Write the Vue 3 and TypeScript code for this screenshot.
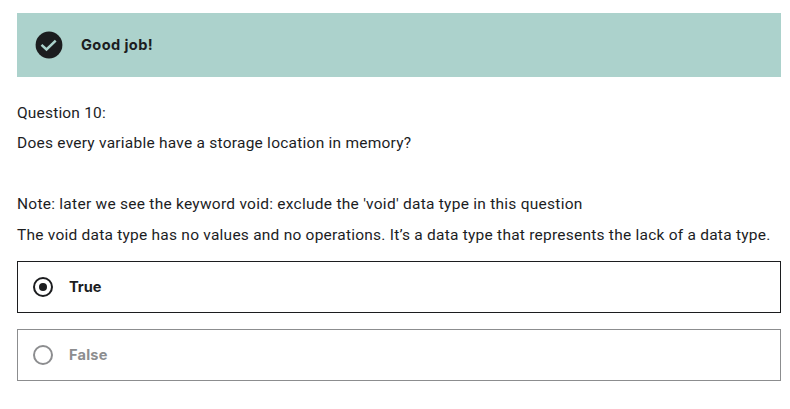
<script setup lang="ts">
import { ref } from 'vue'

interface Line { text: string; id: string }

const lines: Line[] = [
  { id: 'number', text: 'Question 10:' },
  { id: 'prompt', text: 'Does every variable have a storage location in memory?' },
  { id: 'gap', text: '\u00a0' },
  { id: 'note', text: "Note: later we see the keyword void: exclude the 'void' data type in this question" },
  { id: 'void', text: 'The void data type has no values and no operations. It’s a data type that represents the lack of a data type.' },
]
const options: string[] = ['True', 'False']
const selected = ref<string>('True')
</script>

<template>
  <main class="quiz">
    <header class="banner">
      <svg class="check" viewBox="0 0 28 28" aria-hidden="true">
        <circle cx="14" cy="14" r="13.4" fill="#1c1d1f" />
        <path d="M6.5 13.8l5 4.7 9.2-8.8" fill="none" stroke="#acd2cc" stroke-width="2.5" />
      </svg>
      <strong class="praise">Good job!</strong>
    </header>
    <section class="question">
      <p v-for="line in lines" :key="line.id" class="line"><span :class="line.id">{{ line.text }}</span></p>
    </section>
    <div class="options" role="radiogroup">
      <div
        v-for="option in options"
        :key="option"
        class="option"
        :class="{ chosen: option === selected }"
        role="radio"
        :aria-checked="option === selected"
        @click="selected = option"
      >
        <span class="ring"></span>
        <span :class="['label', option.toLowerCase()]">{{ option }}</span>
      </div>
    </div>
  </main>
</template>

<style>
body { background: #fff; }
</style>

<style scoped>
.quiz {
  box-sizing: border-box;
  width: 790px;
  height: 409px;
  padding: 13px 9px 0 17px;
  font-family: Roboto, "Open Sans", sans-serif;
  color: #1c1d1f;
  overflow: hidden;
}
.banner {
  display: flex;
  align-items: center;
  height: 64px;
  box-sizing: border-box;
  padding-left: 18px;
  background: #acd2cc;
}
.check { width: 28px; height: 28px; margin-right: 18px; }
.praise { font-family: Inter, sans-serif; font-size: 14.6px; font-weight: 700; line-height: 20px; letter-spacing: 0.4px; }
.question { padding-top: 21px; }
.line { margin: 0; height: 30.4px; line-height: 30.4px; font-family: Roboto, sans-serif; font-size: 15.5px; font-weight: 400; white-space: nowrap; }
.number { letter-spacing: 0.18px; }
.prompt { letter-spacing: 0.24px; }
.note { letter-spacing: 0.26px; }
.void { letter-spacing: 0.235px; }
.options { display: flex; flex-direction: column; gap: 16px; padding-top: 11px; }
.option {
  display: flex;
  align-items: center;
  box-sizing: border-box;
  height: 52px;
  padding-left: 15px;
  border: 1px solid #8c8d8f;
  color: #8c8d8f;
}
.chosen { border-color: #1c1d1f; color: #1c1d1f; }
.ring {
  display: flex;
  align-items: center;
  justify-content: center;
  box-sizing: border-box;
  width: 20px;
  height: 20px;
  margin-right: 16px;
  border: 2px solid currentColor;
  border-radius: 50%;
}
.chosen .ring::after { content: ""; width: 8px; height: 8px; border-radius: 50%; background: currentColor; }
.label { font-family: Inter, sans-serif; font-size: 14.6px; font-weight: 700; line-height: 20px; }
.true { letter-spacing: -0.1px; }
.false { letter-spacing: 0.2px; }
</style>
